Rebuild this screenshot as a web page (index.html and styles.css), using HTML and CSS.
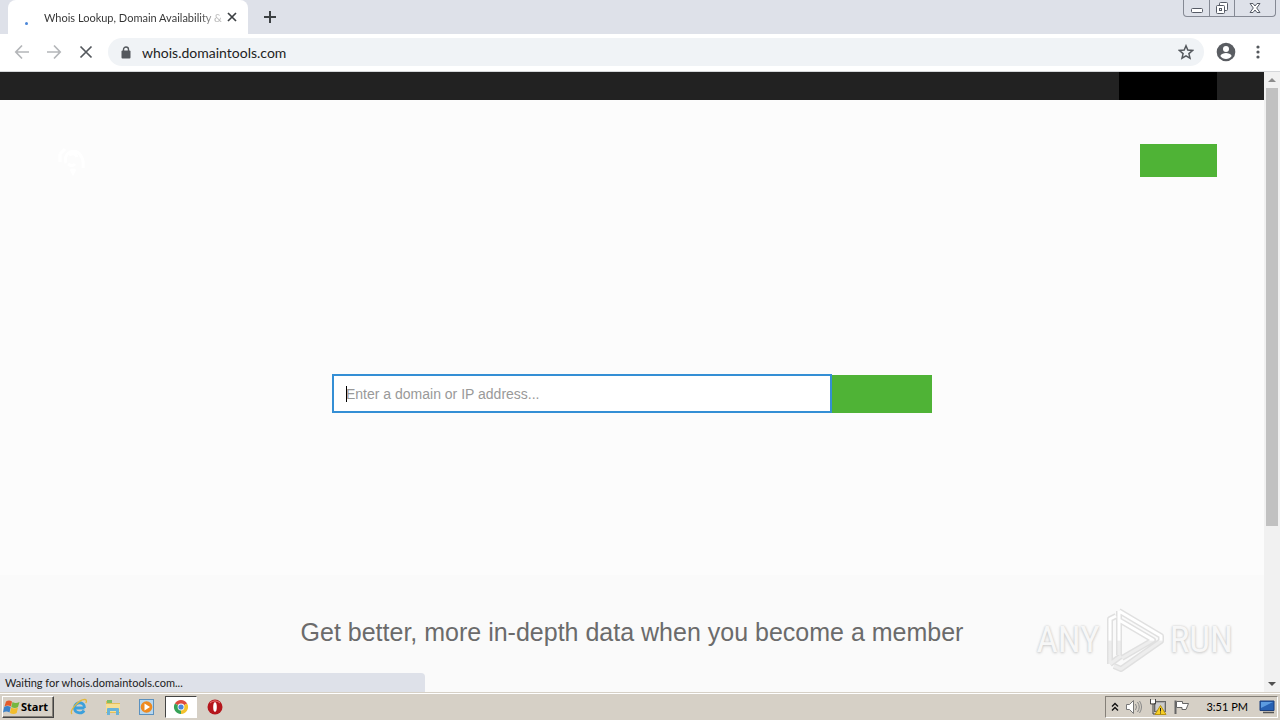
FILE: index.html
```html
<!DOCTYPE html>
<html lang="en">
<head>
<meta charset="utf-8">
<meta name="viewport" content="width=device-width, initial-scale=1">
<title>Whois Lookup, Domain Availability &amp; IP Search</title>
<link rel="stylesheet" href="styles.css">
</head>
<body>
<header class="tabstrip">
  <div class="tab">
    <span class="spinner"></span>
    <span class="tab-title">Whois Lookup, Domain Availability &amp;</span>
    <button class="icon-btn tab-close" aria-label="Close tab"><svg width="10" height="10" viewBox="0 0 10 10"><path d="M1 1l8 8M9 1l-8 8" stroke="#3c4043" stroke-width="1.7"/></svg></button>
  </div>
  <button class="icon-btn new-tab" aria-label="New tab"><svg width="12" height="12" viewBox="0 0 12 12"><path d="M6 0v12M0 6h12" stroke="#3c4043" stroke-width="2"/></svg></button>
  <div class="window-controls">
    <button class="icon-btn" aria-label="Minimize"><svg width="14" height="16" viewBox="0 0 14 16"><rect x="1.500" y="8.500" width="11" height="4" rx="1" fill="#fff" stroke="#565b66"/></svg></button>
    <button class="icon-btn" aria-label="Restore"><svg width="14" height="16" viewBox="0 0 14 16"><g fill="#fff" stroke="#565b66"><rect x="4.500" y="2.500" width="8" height="8" rx="1"/><rect x="1.500" y="5.500" width="8" height="8" rx="1"/><rect x="4.500" y="8.500" width="2" height="2"/></g></svg></button>
    <button class="icon-btn wide" aria-label="Close window"><svg width="14" height="16" viewBox="0 0 14 16"><path d="M2 3.500h3l2 2.500 2-2.500h3L8.700 8l3.300 4.500H9L7 10l-2 2.500H2L5.300 8z" fill="#fff" stroke="#565b66"/></svg></button>
  </div>
</header>
<nav class="toolbar">
  <button class="icon-btn nav-btn" aria-label="Back"><svg width="16" height="16" viewBox="0 0 16 16"><path d="M15 8H2M8 1.500L1.800 8 8 14.500" fill="none" stroke="#b4b6b9" stroke-width="1.700"/></svg></button>
  <button class="icon-btn nav-btn" aria-label="Forward"><svg width="16" height="16" viewBox="0 0 16 16"><path d="M1 8h13M8 1.500L14.200 8 8 14.500" fill="none" stroke="#b4b6b9" stroke-width="1.700"/></svg></button>
  <button class="icon-btn nav-btn" aria-label="Stop loading"><svg width="14" height="14" viewBox="0 0 14 14"><path d="M1.500 1.500l11 11M12.500 1.500l-11 11" stroke="#54585d" stroke-width="1.700"/></svg></button>
  <div class="omnibox">
    <svg width="10" height="13" viewBox="0 0 10 13"><path d="M2.500 5V3.500a2.500 2.500 0 0 1 5 0V5" fill="none" stroke="#54585d" stroke-width="1.400"/><rect x="0.500" y="4.500" width="9" height="8" rx="1" fill="#54585d"/></svg>
    <input class="url" type="text" value="whois.domaintools.com" aria-label="Address">
    <button class="icon-btn" aria-label="Bookmark"><svg width="16" height="16" viewBox="0 0 16 16"><path d="M8 1.800l1.800 4.300 4.700.4-3.600 3.100 1.100 4.600L8 11.800l-4 2.400 1.100-4.600L1.500 6.500l4.700-.4z" fill="none" stroke="#54585d" stroke-width="1.500"/></svg></button>
  </div>
  <button class="icon-btn profile" aria-label="Profile"><svg width="20" height="20" viewBox="0 0 20 20"><circle cx="10" cy="10" r="9.300" fill="#5a5d62"/><circle cx="10" cy="7" r="3" fill="#fff"/><path d="M4.300 14c1-2 3.500-2.900 5.700-2.900s4.700.9 5.700 2.900c-1.300 1.900-3.400 3-5.700 3s-4.400-1.100-5.700-3z" fill="#fff"/></svg></button>
  <button class="icon-btn menu" aria-label="Menu"><svg width="4" height="14" viewBox="0 0 4 14" fill="#54585d"><circle cx="2" cy="2" r="1.600"/><circle cx="2" cy="7" r="1.600"/><circle cx="2" cy="12" r="1.600"/></svg></button>
</nav>
<div class="viewport">
  <main class="page">
    <div class="topbar"><div class="account"></div></div>
    <section class="hero">
      <div class="site-head">
        <svg class="logo" width="34" height="34" viewBox="0 0 34 34" fill="none" stroke="#fff" stroke-width="3"><path d="M10 19a8 8 0 0 1 15-7q3 4 2 12M13 11q6-3 8 2M4 10l5-5M12 20q4 3 7 0M15 25l2 4 2-4M4 10v8"/></svg>
        <button class="green login" aria-label="Log in"></button>
      </div>
      <form class="search">
        <input class="query" type="text" placeholder="Enter a domain or IP address..." aria-label="Domain or IP address">
        <span class="caret"></span>
        <button class="green go" type="button" aria-label="Search"></button>
      </form>
    </section>
    <section class="member"><h2>Get better, more in-depth data when you become a member</h2></section>
  </main>
  <div class="scrollbar">
    <button class="icon-btn arrow" aria-label="Scroll up"><svg width="8" height="4" viewBox="0 0 8 4"><path d="M4 0l4 4H0z" fill="#8d8d8d"/></svg></button>
    <div class="track"><div class="thumb"></div></div>
    <button class="icon-btn arrow" aria-label="Scroll down"><svg width="8" height="4" viewBox="0 0 8 4"><path d="M4 4l4-4H0z" fill="#505050"/></svg></button>
  </div>
  <div class="status">Waiting for whois.domaintools.com...</div>
  <div class="watermark">
    <span>ANY</span>
    <svg width="60" height="64" viewBox="0 0 60 64" fill="none" stroke-linejoin="round">
      <defs><linearGradient id="shine" x1="0" y1="0" x2="0" y2="64" gradientUnits="userSpaceOnUse"><stop offset=".5" stop-color="#fff"/><stop offset=".52" stop-color="#ededed"/></linearGradient></defs>
      <path d="M5 56V11l6-3M14 3v44M14 3l42 25v5L16 61l-7-3M14 12l34 20-31 18M5 56l11-8" stroke="#e0e0e0" stroke-width="6"/>
      <path d="M5 56V11l6-3M14 3v44M14 3l42 25v5L16 61l-7-3M14 12l34 20-31 18M5 56l11-8" stroke="url(#shine)" stroke-width="3"/></svg>
    <span>RUN</span>
  </div>
</div>
<footer class="taskbar">
  <button class="start"><svg width="18" height="16" viewBox="0 0 18 16"><path d="M3 2.500q3-2 6 0L8 7.500q-3-2-6.500 0z" fill="#e45b2b"/><path d="M9.500 3q3 2 7 0l-1.500 5q-3 2-6.700 0z" fill="#75b740"/><path d="M1.200 8q3-2 6.500 0l-1.200 5.500q-3-2-6.500 0z" fill="#3c82c9"/><path d="M8.200 8.500q3 2 6.800 0l-1.300 5.500q-3 2-6.800 0z" fill="#f2bd2c"/></svg>Start</button>
  <div class="launch">
    <button class="task" aria-label="Internet Explorer"><svg width="18" height="18" viewBox="0 0 18 18" fill="none"><path d="M14.500 10H5M14.500 10c.3-7-10-7-10 0 0 5.500 7.500 6.300 9.500 2.500" stroke="#3ba0dc" stroke-width="2.800"/><path d="M2 16C-1 13 9 1 15 1.500c2 .2 1.500 2.500.8 3.500" stroke="#e2b83c" stroke-width="1.300"/></svg></button>
    <button class="task" aria-label="File Explorer"><svg width="18" height="18" viewBox="0 0 18 18"><path d="M2 3h5l1 2h8v10H2z" fill="#e5bf59"/><path d="M3 2h5v3H3z" fill="#7fbd65"/><path d="M2 6h14v8H2z" fill="#f6df94"/><path d="M3 17v-6q0-1 1-1h10q1 0 1 1v6h-3v-4H6v4z" fill="#69b3d8"/></svg></button>
    <button class="task" aria-label="Media Player"><svg width="18" height="18" viewBox="0 0 18 18"><rect x="1.500" y="1.500" width="14" height="15" fill="#b7d7ef" stroke="#5b91bf"/><circle cx="8.500" cy="9" r="5.800" fill="#ee8a20"/><path d="M6.500 5.500v7l5.500-3.500z" fill="#fff"/></svg></button>
    <button class="task active" aria-label="Chrome"><svg width="16" height="16" viewBox="0 0 16 16"><path d="M8 8L1.900 4.500A7 7 0 0 1 14.100 4.500z" fill="#dd4b3e"/><path d="M8 8L14.100 4.500A7 7 0 0 1 8 15z" fill="#f4c22c"/><path d="M8 8v7A7 7 0 0 1 1.900 4.500z" fill="#36a257"/><circle cx="8" cy="8" r="3.400" fill="#fff"/><circle cx="8" cy="8" r="2.600" fill="#4a86dc"/></svg></button>
    <button class="task" aria-label="Opera"><svg width="16" height="16" viewBox="0 0 16 16"><circle cx="8" cy="8" r="7.500" fill="#b5161c"/><path d="M3 4a7 7 0 0 1 10 0" stroke="#e77" fill="none"/><ellipse cx="8" cy="8" rx="1.800" ry="4.800" fill="#fff"/></svg></button>
  </div>
  <div class="tray">
    <svg width="8" height="10" viewBox="0 0 8 10" fill="none" stroke="#111" stroke-width="1.400"><path d="M1 4.500l3-3 3 3M1 8.500l3-3 3 3"/></svg>
    <svg width="18" height="16" viewBox="0 0 18 16"><path d="M1.500 5.500h3l4-4v13l-4-4h-3z" fill="#fff" stroke="#777"/><path d="M10.500 5q2 3 0 6M12.500 3q3.500 5 0 10M14.500 2q4 6 0 12" fill="none" stroke="#888"/></svg>
    <svg width="18" height="16" viewBox="0 0 18 16"><rect x="5.500" y="2.500" width="11" height="10" fill="#aaa" stroke="#666"/><path d="M7 4h8v7H7z" fill="#ccc"/><path d="M1.500 0v5h5V0M4 5v10h4" fill="none" stroke="#444"/><path d="M2 1h4v3H2z" fill="#fff"/><path d="M11.500 6.500L17 15.500H6z" fill="#f7cf25" stroke="#b69212"/><path d="M11.500 9v3.500M11.500 13.500v1" stroke="#222"/></svg>
    <svg width="18" height="16" viewBox="0 0 18 16"><path d="M2.500 15V1.500" stroke="#666" stroke-width="2"/><path d="M3.500 2.500h6v2h6l-2.500 6H9v-2H3.500z" fill="#fff" stroke="#666"/></svg>
    <span class="clock">3:51 PM</span>
    <svg width="16" height="14" viewBox="0 0 16 14"><path d="M1 1h14v9.500H1z" fill="#2761b3" stroke="#1b3f7c"/><path d="M2 2h12L2 8z" fill="#5c9be0"/><path d="M4 12.500h11" stroke="#555" stroke-width="1.500"/></svg>
  </div>
</footer>
</body>
</html>
```
FILE: styles.css
```css
* { box-sizing: border-box; }
body {
  margin: 0;
  height: 100vh;
  display: flex;
  flex-direction: column;
  overflow: hidden;
  font-family: Lato, "Noto Sans", sans-serif;
  font-size: 11px;
  color: #222;
}
button, input { font: inherit; margin: 0; }
svg { display: block; flex: none; }
.icon-btn {
  display: flex;
  align-items: center;
  justify-content: center;
  padding: 0;
  border: 0;
  background: none;
}
.tabstrip { display: flex; height: 34px; background: #dee1e9; padding-left: 8px; flex: none; }
.tab {
  display: flex;
  align-items: center;
  width: 240px;
  padding: 0 10px 0 17px;
  background: #fff;
  border-radius: 8px 8px 0 0;
}
.spinner { width: 3px; height: 3px; margin: 12px 16px 0 0; border-radius: 50%; background: #4a86d8; }
.tab-title {
  flex: 1;
  white-space: nowrap;
  color: transparent;
  background: linear-gradient(90deg, #333 155px, #bbb 172px);
  -webkit-background-clip: text;
  background-clip: text;
}
.tab-close { width: 12px; height: 16px; margin-left: 4px; }
.new-tab { width: 44px; }
.window-controls {
  display: flex;
  height: 17px;
  margin: 0 4px 0 auto;
  border: 1px solid #858994;
  border-top: 0;
  border-radius: 0 0 4px 4px;
}
.window-controls .icon-btn { width: 25px; }
.window-controls .icon-btn + .icon-btn { border-left: 1px solid #858994; }
.window-controls .icon-btn.wide { width: 41px; }
.toolbar {
  display: flex;
  align-items: center;
  height: 38px;
  padding: 0 6px 1px;
  background: #fff;
  border-bottom: 1px solid #d5d7da;
  flex: none;
}
.nav-btn { width: 32px; height: 28px; }
.omnibox {
  flex: 1;
  display: flex;
  align-items: center;
  height: 28px;
  margin-left: 6px;
  padding: 0 10px 0 13px;
  border-radius: 14px;
  background: #f0f3f6;
}
.url { flex: 1; min-width: 0; margin-left: 11px; padding: 0; border: 0; outline: 0; background: none; font-size: 14px; color: #222; }
.profile { margin-left: 12px; }
.menu { width: 28px; margin: 0 2px 0 8px; }
.viewport { position: relative; flex: 1; display: flex; min-height: 0; }
.page { flex: 1; display: flex; flex-direction: column; min-width: 0; background: #fafafa; }
.topbar { display: flex; justify-content: flex-end; height: 28px; padding-right: 47px; background: #222; }
.account { width: 98px; background: #000; }
.hero { height: 475px; background: #fcfcfc; }
.site-head { display: flex; justify-content: space-between; padding: 44px 47px 0 56px; }
.green { border: 0; background: #4fb336; }
.login { width: 77px; height: 33px; }
.search { position: relative; display: flex; width: 600px; margin: 196px auto 0; }
.query {
  flex: 1;
  height: 39px;
  padding: 0 12px;
  border: 2px solid #348fd5;
  outline: 0;
  background: #fff;
  font-family: "Liberation Sans", Arial, sans-serif;
  font-size: 14px;
}
.query::placeholder { color: #999; opacity: 1; }
.caret { position: absolute; left: 14px; top: 12px; width: 1px; height: 16px; background: #000; }
.go { width: 100px; height: 38px; margin-top: 1px; }
.member { text-align: center; }
.member h2 {
  margin: 42px 0 0;
  font-family: "Liberation Sans", Arial, sans-serif;
  font-size: 25px;
  line-height: 30px;
  font-weight: 400;
  color: #6b6b6b;
}
.scrollbar { display: flex; flex-direction: column; width: 16px; background: #f1f1f1; }
.arrow { height: 16px; }
.track { flex: 1; padding: 0 2px; }
.thumb { height: 438px; background: #c1c1c1; }
.status {
  position: absolute;
  left: 0;
  bottom: 0;
  width: 425px;
  height: 19px;
  padding-left: 5px;
  line-height: 20px;
  background: #dee1e9;
  border-radius: 0 4px 0 0;
}
.watermark {
  position: absolute;
  right: 47px;
  bottom: 20px;
  display: flex;
  align-items: center;
  gap: 5px;
  font-family: "Liberation Sans Narrow", "Roboto Condensed", "Liberation Sans", sans-serif;
  font-size: 37px;
  line-height: 40px;
  color: #f7f7f7;
  text-shadow: 0 0 2px #ccc, 0 1px 3px #ccc;
}
.taskbar {
  display: flex;
  align-items: center;
  height: 28px;
  padding: 0 2px;
  background: #d6d0c6;
  border-top: 1px solid #d6d0c6;
  box-shadow: inset 0 1px #fff;
  flex: none;
}
.start {
  display: flex;
  align-items: center;
  width: 52px;
  height: 22px;
  padding: 0;
  border: 1px solid;
  border-color: #fff #444 #444 #fff;
  box-shadow: inset -1px -1px #858078;
  background: #d6d0c6;
  font-family: "Noto Sans", sans-serif;
  font-weight: 700;
  color: #000;
}
.launch { display: flex; align-items: center; gap: 2px; margin-left: 9px; }
.task { display: flex; align-items: center; justify-content: center; width: 32px; height: 22px; padding: 0; border: 0; background: none; }
.active { background: #fff; border: 1px solid; border-color: #444 #fff #fff #444; }
.tray {
  display: flex;
  align-items: center;
  gap: 6px;
  height: 22px;
  margin-left: auto;
  padding: 0 2px 0 5px;
  border: 1px solid;
  border-color: #858078 #fff #fff #858078;
  color: #000;
}
.clock { margin: 0 5px 0 9px; }
```
